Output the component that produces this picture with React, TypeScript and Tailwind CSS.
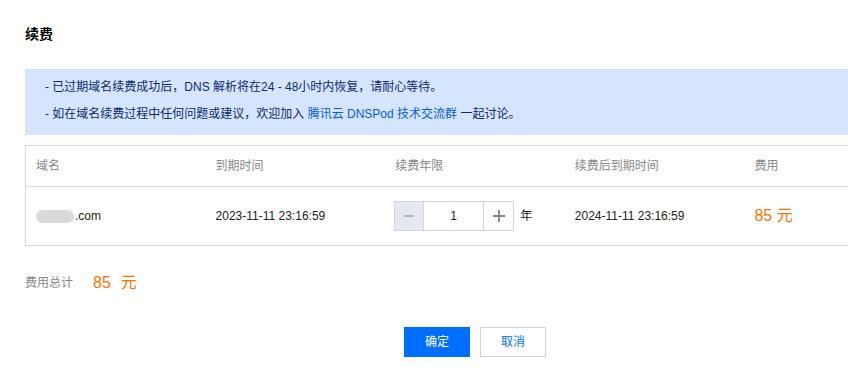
const FONT = "font-['Liberation_Sans','Noto_Sans_CJK_SC',sans-serif]";

const columns = ["域名", "到期时间", "续费年限", "续费后到期时间", "费用"];

const Stepper = () => (
  <div className="flex items-center">
    <div className="flex h-[30px] border border-[#cfd5de]">
      <button className="flex w-[29px] items-center justify-center bg-[#e5e8ee] border-r border-[#cfd5de]">
        <span className="block h-[2px] w-[10px] bg-[#b5b9bf]" />
      </button>
      <div className="flex w-[59px] items-center justify-center text-[12px] text-[#222]">1</div>
      <button className="relative flex w-[30px] items-center justify-center border-l border-[#cfd5de]">
        <span className="absolute h-[2px] w-[12px] bg-[#888]" />
        <span className="absolute h-[12px] w-[2px] bg-[#888]" />
      </button>
    </div>
    <span className="ml-[6px] text-[12px] text-[#222]">年</span>
  </div>
);

const App = () => {
  return (
    <div className={`w-[848px] h-[379px] overflow-hidden bg-white ${FONT}`}>
      <div className="w-[950px] px-[25px] pt-[24px]">
        <h2 className="text-[14px] font-bold leading-[20px] text-black">续费</h2>

        <div className="mt-[25px] bg-[#d5e5fd] pl-[20px] pt-[8px] pb-[11px] text-[12px] leading-[20px] text-[#0b2a6f]">
          <p>- 已过期域名续费成功后，DNS 解析将在24 - 48小时内恢复，请耐心等待。</p>
          <p className="mt-[7px]">
            - 如在域名续费过程中任何问题或建议，欢迎加入{" "}
            <a className="text-[#0a5ae8]">腾讯云 DNSPod 技术交流群</a> 一起讨论。
          </p>
        </div>

        <div className="mt-[10px] border border-[#d6dae2]">
          <div className="grid grid-cols-5 h-[41px] items-center border-b border-[#d6dae2] text-[12px] text-[#888]">
            {columns.map((c) => (
              <div key={c} className="px-[10px]">{c}</div>
            ))}
          </div>
          <div className="grid grid-cols-5 h-[58px] items-center text-[12px] text-[#222]">
            <div className="flex items-center px-[10px]">
              <span className="mr-[1px] h-[13px] w-[38px] rounded-full bg-[#d9dadb]" />
              <span>.com</span>
            </div>
            <div className="px-[10px]">2023-11-11 23:16:59</div>
            <div className="pl-[9px]">
              <Stepper />
            </div>
            <div className="px-[10px]">2024-11-11 23:16:59</div>
            <div className="px-[10px] text-[16px] text-[#ff7200]">85 元</div>
          </div>
        </div>

        <div className="mt-[25px] flex items-center">
          <span className="text-[12px] text-[#888]">费用总计</span>
          <span className="ml-[20px] text-[16px] text-[#ff7200]">85</span>
          <span className="ml-[10px] text-[16px] text-[#ff7200]">元</span>
        </div>

        <div className="mt-[32px] flex justify-center gap-[10px]">
          <button className="h-[30px] w-[66px] bg-[#006eff] text-[12px] text-white">确定</button>
          <button className="h-[30px] w-[66px] border border-[#cfd5de] bg-white text-[12px] text-[#006eff]">取消</button>
        </div>
      </div>
    </div>
  );
};

export default App;
